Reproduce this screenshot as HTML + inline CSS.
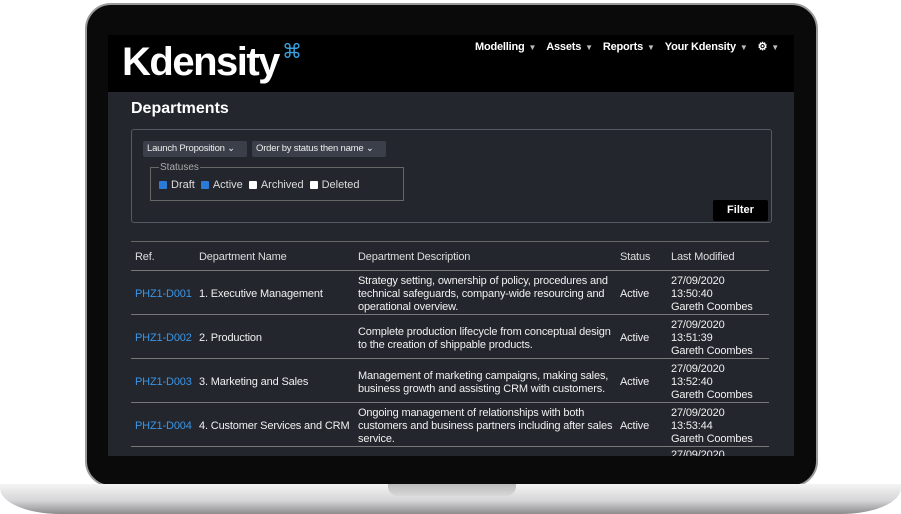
<!DOCTYPE html>
<html><head><style>
*{margin:0;padding:0;box-sizing:border-box}
body{width:901px;height:514px;background:#fff;position:relative;overflow:hidden;font-family:"Liberation Sans",sans-serif;font-size:11px;color:#e8e8e8}
.bezel{position:absolute;left:85px;top:3px;width:733px;height:484px;background:#0a0a0a;border-radius:26px;border:2px solid #9a9a9a}
.screen{position:absolute;left:108px;top:35px;width:686px;height:421px;background:#000;overflow:hidden}
.content{position:absolute;left:0;top:57px;width:686px;height:364px;background:#23262d}
.base{position:absolute;left:0;top:484px;width:901px;height:30px;background:linear-gradient(#f4f4f4,#d6d6d8 55%,#8c8c8e);border-radius:0 0 60px 60px/0 0 26px 26px}
.notch{position:absolute;left:388px;top:484px;width:128px;height:12px;background:linear-gradient(#bbb,#d8d8d8);border-radius:0 0 10px 10px}
.logo{position:absolute;left:14px;top:5px;font-size:40px;font-weight:bold;color:#fff;letter-spacing:-1.5px}
.logo span{font-size:20px;color:#3aa0e0;position:absolute;left:160px;top:-1px;font-weight:normal;letter-spacing:0}
.nav{position:absolute;top:5px;left:367px;font-size:11px;font-weight:bold;color:#fff;white-space:nowrap;letter-spacing:-0.2px}
.nav i{font-style:normal;font-size:8px;color:#bbb;margin:0 10px 0 4px}
h1{position:absolute;left:23px;top:8px;font-size:16px;font-weight:bold;color:#fff}
.fbox{position:absolute;left:23px;top:37px;width:641px;height:94px;border:1px solid #555a62;border-radius:3px}
.sel{position:absolute;top:11px;height:16px;background:#3a3f49;border-radius:2px;font-size:9.5px;padding:2px 4px;color:#eee;letter-spacing:-0.2px}
fieldset{position:absolute;left:18px;top:32px;width:254px;height:39px;border:1px solid #666;padding:0 8px}
legend{font-size:10px;color:#aaa;padding:0 1px}
.cb{display:inline-block;width:8px;height:8px;background:#fff;border-radius:1px;margin-right:4px;vertical-align:-1px}
.cb.on{background:#2b7ad8}
.fs{font-size:11px;color:#ddd;margin-top:6px}
.fs b{font-weight:normal;margin-right:6px}
.btn{position:absolute;left:581px;top:70px;width:55px;height:21px;background:#000;border-radius:2px;font-weight:bold;font-size:11px;color:#fff;text-align:center;line-height:21px}
table{position:absolute;left:23px;top:149px;width:638px;border-collapse:collapse;font-size:11px;letter-spacing:-0.15px}
th{text-align:left;font-weight:normal;color:#ddd;height:29px;border-top:1px solid #666;padding-left:4px;padding-top:2px}
td{height:44px;border-top:1px solid #777;padding-left:4px;line-height:13px;color:#f0f0f0;padding-top:4px}
td a{color:#3a95e6}
</style></head><body>
<div class="bezel"></div>
<div class="screen">
 <div class="logo">Kdensity<span>⌘</span></div>
 <div class="nav">Modelling<i>▼</i>Assets<i>▼</i>Reports<i>▼</i>Your Kdensity<i>▼</i>⚙<i>▼</i></div>
 <div class="content">
  <h1>Departments</h1>
  <div class="fbox">
   <div class="sel" style="left:11px;width:104px">Launch Proposition ⌄</div>
   <div class="sel" style="left:120px;width:134px">Order by status then name ⌄</div>
   <fieldset><legend>Statuses</legend>
    <div class="fs"><span class="cb on"></span><b>Draft</b><span class="cb on"></span><b>Active</b><span class="cb"></span><b>Archived</b><span class="cb"></span><b>Deleted</b></div>
   </fieldset>
   <div class="btn">Filter</div>
  </div>
  <table>
   <tr><th style="width:64px">Ref.</th><th style="width:159px">Department Name</th><th style="width:262px">Department Description</th><th style="width:51px">Status</th><th>Last Modified</th></tr>
   <tr><td><a>PHZ1-D001</a></td><td>1. Executive Management</td><td>Strategy setting, ownership of policy, procedures and technical safeguards, company-wide resourcing and operational overview.</td><td>Active</td><td>27/09/2020<br>13:50:40<br>Gareth Coombes</td></tr>
   <tr><td><a>PHZ1-D002</a></td><td>2. Production</td><td>Complete production lifecycle from conceptual design to the creation of shippable products.</td><td>Active</td><td>27/09/2020<br>13:51:39<br>Gareth Coombes</td></tr>
   <tr><td><a>PHZ1-D003</a></td><td>3. Marketing and Sales</td><td>Management of marketing campaigns, making sales, business growth and assisting CRM with customers.</td><td>Active</td><td>27/09/2020<br>13:52:40<br>Gareth Coombes</td></tr>
   <tr><td><a>PHZ1-D004</a></td><td>4. Customer Services and CRM</td><td>Ongoing management of relationships with both customers and business partners including after sales service.</td><td>Active</td><td>27/09/2020<br>13:53:44<br>Gareth Coombes</td></tr>
   <tr><td></td><td></td><td></td><td></td><td style="vertical-align:top;padding-top:2px">27/09/2020</td></tr>
  </table>
 </div>
</div>
<div class="base"></div>
<div class="notch"></div>
</body></html>
